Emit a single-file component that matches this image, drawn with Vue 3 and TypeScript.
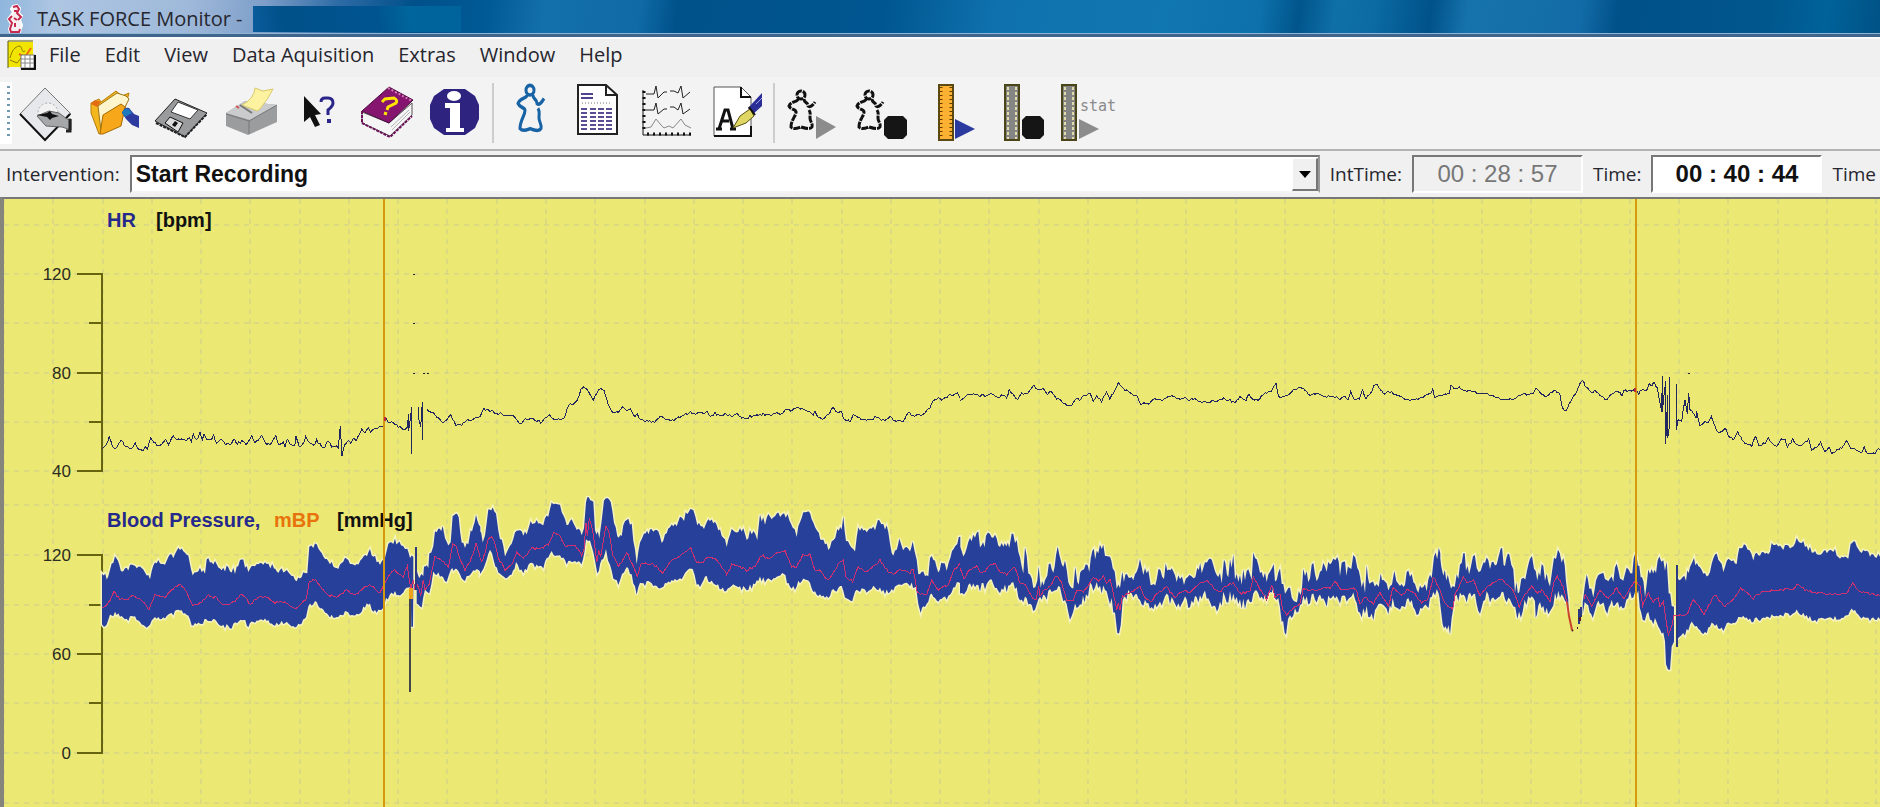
<script setup lang="ts">
import { ref } from 'vue'

type Point = [number, number]
interface Band { x: number; y: number; ripple: number; top: string; bottom: string }
interface Trace { x: number; y: number; points: string }

const intervention = ref('Start Recording')
const intTime = ref('00 : 28 : 57')
const time = ref('00 : 40 : 44')

const menus = ['File', 'Edit', 'View', 'Data Aquisition', 'Extras', 'Window', 'Help']

const columns = Array.from({ length: 39 }, (_, i) => Math.round(4 + i * 49.27))
const rows = [225, 274, 323, 373, 422, 471, 505, 555, 605, 654, 703, 753, 803]

const axes = [
  { top: 274, bottom: 471, minor: [323, 422], labels: [{ y: 274, text: '120' }, { y: 373, text: '80' }, { y: 471, text: '40' }] },
  { top: 555, bottom: 753, minor: [605, 703], labels: [{ y: 555, text: '120' }, { y: 654, text: '60' }, { y: 753, text: '0' }] },
]

// Samples are stored in thirds of a chart unit, relative to each block's origin.
const parse = (s: string): Point[] => s.trim().split(/\s+/).map(p => p.split(',').map(Number) as Point)

const noise = (n: number): number => {
  const v = Math.sin(n * 12.9898) * 43758.5453
  return v - Math.floor(v) - 0.5
}

// Interpolates between samples and adds the beat-to-beat ripple.
const edge = (s: string, ox: number, oy: number, ripple: number): string[] => {
  const pts = parse(s)
  const out: string[] = []
  for (let i = 0; i < pts.length - 1; i++) {
    const [x1, y1] = pts[i]
    const [x2, y2] = pts[i + 1]
    const steps = Math.max(1, Math.round((x2 - x1) / 5))
    for (let k = 0; k < steps; k++) {
      const x = x1 + ((x2 - x1) * k) / steps
      const y = y1 + ((y2 - y1) * k) / steps + noise(x + oy) * ripple
      out.push(`${(ox + x / 3).toFixed(1)},${(oy + y / 3).toFixed(1)}`)
    }
  }
  const last = pts[pts.length - 1]
  out.push(`${(ox + last[0] / 3).toFixed(1)},${(oy + last[1] / 3).toFixed(1)}`)
  return out
}

const toLine = (t: Trace): string => edge(t.points, t.x, t.y, 7).join(' ')

const toBand = (b: Band): string =>
  [...edge(b.top, b.x, b.y, b.ripple), ...edge(b.bottom, b.x, b.y, b.ripple * 0.8).reverse()].join(' ')

const heartRate = ([
  { x: 0, y: 200, points: '306,745 318,738 328,713 338,742 345,745 357,730 364,718 372,735 383,742 395,742 406,730 416,748 428,750 436,738 442,745 452,712 462,730 475,735 485,732 497,718 505,732 520,705 530,720 545,718 560,725 568,712 574,728 580,705 590,722 600,700 607,722 612,702 625,722 632,722 641,706 650,730 665,715 677,733 690,733 704,718 712,730 725,724 738,732 755,708 765,728 785,706 795,728 810,735 827,708 837,735 850,728 855,737 862,720 875,738 884,738 888,712 898,740 905,738 917,712 928,730 942,738 950,720 965,740 975,738 985,722 995,740 1015,740 1021,678 1026,766 1034,735 1046,722 1052,733 1062,712 1068,722 1085,690 1095,700 1105,682 1112,698 1125,685 1140,682 1150,678 1156,650 1165,665 1180,665 1195,680 1212,688 1222,680 1226,640 1226,690 1235,620 1235,762' },
  { x: 0, y: 200, points: '1256,618 1256,655 1262,685 1267,607 1267,720' },
  { x: 0, y: 200, points: '1280,625 1285,632 1300,638 1325,668 1340,660 1352,645 1368,675 1385,675 1400,658 1415,662 1440,650' },
  { x: 480, y: 370, points: '0,138 5,126 12,118 25,122 42,125 55,135 62,130 78,136 98,136 110,148 120,160 132,150 150,146 165,148 182,156 195,146 208,136 222,150 240,150 252,145 266,105 280,102 292,92 303,58 312,52 325,62 340,88 350,68 362,56 372,60 385,108 395,125 415,128 428,112 440,122 452,120 465,142 472,132 480,148 495,152 518,157 530,150 547,138 560,148 582,150 600,142 612,133 632,128 650,130 660,125 672,130 680,125 692,142 705,130 718,138 735,132 758,140 772,132 790,146 810,140 830,136 850,132 870,136 890,130 905,134 920,118 932,122 947,112 962,116 980,122 1000,132 1005,124 1015,140 1028,150 1040,136 1060,115 1072,128 1085,125 1090,145 1110,155 1120,132 1135,142 1148,150 1175,148 1188,138 1200,150 1220,150 1230,135 1240,150 1258,156 1275,148 1285,128 1298,138 1325,135 1340,122 1350,115 1360,92 1375,80 1385,92 1405,78 1420,74 1432,68 1440,85' },
  { x: 960, y: 370, points: '0,90 20,75 42,70 60,78 80,75 100,72 115,82 125,75 140,82 148,60 158,75 173,92 185,68 200,75 222,46 235,60 248,56 262,70 275,65 290,85 305,92 320,105 335,103 350,82 358,90 372,75 390,72 400,92 410,80 425,95 440,65 450,85 465,62 475,40 490,55 510,70 530,78 542,102 552,96 565,104 580,88 610,88 630,78 655,85 700,88 725,95 770,95 785,86 805,88 825,98 840,82 858,92 867,70 878,88 895,92 905,78 925,66 935,62 948,42 955,78 970,82 990,72 1000,55 1022,53 1040,65 1055,78 1070,68 1090,78 1130,80 1140,88 1155,82 1165,88 1172,65 1182,88 1198,85 1208,62 1218,85 1230,70 1247,40 1262,60 1275,75 1285,65 1310,72 1335,85 1350,94 1370,84 1390,85 1400,72 1412,75 1418,55 1424,85 1440,75' },
  { x: 1400, y: 360, points: '120,105 135,102 148,98 153,72 162,88 178,82 190,90 220,95 245,100 265,105 290,112 312,122 340,115 365,102 385,104 400,102 408,85 420,100 440,112 452,98 467,93 480,105 487,140 497,155 508,130 525,105 540,72 547,62 560,82 575,100 585,92 600,105 620,118 640,98 660,96 666,108 672,90 690,92 705,86 716,100 725,88 740,90 748,70 756,76 762,68 772,85 778,118 785,155 787,50 787,160 797,60 797,250 803,105 803,235 808,200 808,50' },
  { x: 1400, y: 360, points: '829,75 829,213 834,180 845,182 855,118 862,165 866,98 870,150 880,160 888,175 890,155 900,200 915,185 925,190 934,168 942,190 950,215 965,215 975,204 988,230 1000,240 1013,215 1022,232 1035,250 1055,256 1067,230 1076,255 1095,250 1105,232 1115,250 1130,258 1145,235 1155,240 1162,260 1178,240 1190,256 1210,254 1226,238 1235,268 1250,260 1262,248 1275,275 1287,262 1295,282 1312,268 1325,264 1340,240 1352,265 1365,270 1385,275 1393,262 1402,282 1425,282 1432,265 1440,268' },
] as Trace[]).map(toLine)

const artefacts: Point[] = [[413, 274], [413, 323], [413, 373], [423, 373], [427, 373], [1688, 373]]

const pressure = ([
  { x: 0, y: 480, ripple: 18,
    top: '306,290 325,290 335,245 345,237 358,248 362,275 375,265 400,260 425,265 450,298 460,255 475,245 490,252 510,225 525,228 535,205 550,207 565,235 578,280 600,268 615,275 620,238 640,245 655,265 665,270 685,262 705,275 725,235 740,265 750,270 765,255 800,252 822,262 830,280 840,265 865,280 890,297 915,275 922,275 928,205 940,198 960,205 970,230 990,245 1000,258 1015,262 1030,240 1050,248 1070,260 1092,232 1110,215 1125,228 1140,260 1155,235 1165,198 1185,185 1198,190 1215,205 1222,198 1230,235 1240,230',
    bottom: '306,440 320,440 330,402 350,402 375,418 405,412 425,435 445,444 460,415 485,415 500,405 520,400 540,388 555,398 575,430 600,435 618,415 645,425 660,438 700,438 722,412 745,435 765,425 795,420 820,437 845,425 880,440 905,425 918,415 925,375 940,368 960,378 980,400 1000,412 1035,400 1070,408 1105,370 1120,390 1145,395 1158,360 1175,340 1205,340 1220,320 1232,320 1234,445 1239,445 1240,330' },
  { x: 0, y: 480, ripple: 18,
    top: '1250,270 1258,290 1270,290 1272,255 1285,270 1288,215 1300,205 1305,152 1315,155 1328,145 1335,170 1345,200 1352,180 1358,115 1366,102 1376,115 1385,190 1395,200 1405,195 1412,150 1420,145 1428,110 1441,140',
    bottom: '1250,370 1265,375 1275,330 1288,335 1300,280 1320,285 1340,305 1352,265 1370,270 1390,305 1405,290 1415,280 1430,265 1441,275' },
  { x: 480, y: 370, ripple: 20,
    top: '0,475 8,510 15,490 25,425 38,405 48,430 55,485 75,550 95,525 105,480 120,475 130,495 145,480 152,455 165,450 185,462 205,440 215,400 225,393 240,410 250,445 265,470 275,445 290,475 305,490 312,480 318,400 322,385 340,388 345,480 358,500 365,460 372,388 392,386 402,460 412,500 425,495 435,455 445,440 455,470 465,545 470,580 480,520 492,492 515,482 535,485 545,520 555,500 570,470 590,465 600,440 612,445 622,422 640,425 652,460 672,470 685,438 700,460 720,480 740,525 750,485 770,490 785,475 800,500 815,485 832,500 840,440 855,455 865,440 880,445 895,432 912,430 928,445 938,480 950,495 960,450 970,435 985,422 1000,450 1012,490 1030,510 1045,530 1060,520 1072,480 1085,475 1090,440 1098,510 1110,525 1125,538 1135,470 1150,490 1170,475 1185,480 1198,445 1210,470 1225,478 1235,550 1250,545 1258,515 1275,540 1290,540 1298,518 1310,560 1315,610 1330,600 1345,625 1350,565 1365,570 1375,598 1388,575 1400,595 1412,570 1420,535 1432,520 1441,500',
    bottom: '0,605 10,590 30,545 42,570 55,610 72,628 90,618 108,580 130,608 150,580 165,585 190,588 215,545 240,560 260,580 285,570 300,580 308,575 318,510 330,505 340,540 352,612 365,575 378,540 390,590 400,620 415,645 432,600 445,590 455,620 470,672 480,640 510,640 540,658 560,640 580,632 600,625 620,605 638,602 650,640 660,645 680,622 700,640 738,662 760,648 790,655 815,650 840,625 860,632 890,625 912,612 930,652 945,655 955,635 985,630 1000,660 1020,675 1040,680 1060,665 1085,645 1095,680 1112,697 1130,660 1160,665 1185,652 1215,668 1240,655 1270,645 1295,645 1308,655 1315,700 1322,730 1330,705 1345,700 1350,675 1380,690 1410,680 1420,650 1441,640' },
  { x: 960, y: 370, ripple: 44,
    top: '0,510 10,540 25,530 40,500 55,492 65,545 78,500 95,510 105,478 115,515 130,525 148,545 155,500 165,498 175,535 185,585 190,590 195,545 205,610 220,640 232,635 236,595 242,640 255,645 262,595 280,600 288,540 298,550 305,570 315,570 325,625 340,640 346,590 352,640 365,620 372,590 388,600 397,545 410,560 425,530 435,560 450,540 458,600 470,650 480,660 487,620 510,635 530,615 540,575 550,610 565,610 572,650 590,620 612,610 622,580 635,610 650,625 660,610 672,630 688,600 700,625 712,575 725,595 735,590 741,558 755,590 770,620 785,620 792,590 805,600 820,565 825,620 840,630 855,610 875,620 880,555 890,580 905,620 920,635 930,610 937,575 945,620 955,615 960,580 965,640 975,680 985,650 1000,675 1022,680 1030,600 1045,615 1060,600 1075,620 1090,580 1105,590 1120,558 1132,575 1140,605 1155,590 1168,615 1180,575 1192,585 1200,640 1215,655 1220,605 1228,650 1250,655 1262,608 1270,640 1285,670 1296,655 1303,600 1315,635 1330,640 1340,608 1355,630 1370,640 1390,665 1405,640 1415,620 1422,545 1441,550',
    bottom: '0,655 12,690 20,660 40,645 65,655 80,635 100,635 120,660 145,650 165,640 180,690 190,680 200,700 220,712 235,690 255,690 270,665 290,650 305,665 320,700 330,735 345,700 360,708 378,680 390,650 410,650 425,665 440,660 455,700 465,740 472,795 482,755 488,690 505,675 530,680 545,705 560,700 575,720 595,700 620,675 645,705 670,695 700,700 730,670 750,680 762,712 775,715 790,680 820,680 840,700 870,700 885,665 905,690 920,690 935,660 950,680 960,700 965,755 978,788 990,740 1005,715 1020,710 1030,680 1055,690 1080,675 1100,695 1120,670 1145,695 1175,680 1190,690 1200,745 1215,720 1240,735 1265,705 1285,740 1298,690 1320,710 1340,690 1370,720 1392,722 1410,695 1420,660 1441,690' },
  { x: 1400, y: 360, ripple: 44,
    top: '119,590 130,635 148,645 158,690 170,650 180,620 190,578 198,625 212,630 219,580 230,610 242,635 255,610 275,620 290,605 302,575 315,605 328,590 340,610 345,680 358,680 370,660 382,620 390,600 402,605 412,665 425,612 435,655 450,675 462,615 474,590 490,600 498,665 505,720',
    bottom: '119,720 132,805 150,808 165,715 185,698 205,715 225,705 240,755 260,710 275,725 300,700 325,712 340,725 352,785 368,745 385,715 405,730 407,775 415,735 445,765 460,720 475,705 490,715 500,730 505,760' },
  { x: 1400, y: 360, ripple: 36,
    top: '548,710 555,675 560,640 568,685 580,710 588,650 600,635 615,640 625,665 640,650 650,620 665,660 680,625 697,625 705,590 718,610 726,665 735,700 745,640 755,620 768,650 778,580 790,610 800,620 806,700 815,720 822,740',
    bottom: '548,750 560,730 578,765 590,730 605,728 622,750 640,725 668,745 690,700 715,705 728,790 740,760 760,780 785,820 795,830 798,915 810,915 815,845 822,845' },
  { x: 1400, y: 360, ripple: 18,
    top: '832,655 858,655 862,640 870,625 882,600 895,620 910,640 925,655 935,615 945,580 960,600 970,630 985,600 1010,605 1018,565 1032,555 1048,575 1060,595 1085,575 1105,580 1115,555 1130,550 1150,565 1180,560 1190,542 1205,545 1220,565 1250,575 1262,590 1272,570 1285,580 1300,572 1320,588 1345,588 1352,550 1360,545 1375,565 1400,578 1420,590 1440,590',
    bottom: '832,840 838,825 855,820 875,790 890,800 905,822 920,820 935,790 970,808 985,790 1000,790 1020,765 1060,782 1100,770 1130,765 1170,765 1190,755 1220,770 1245,780 1290,778 1330,770 1355,750 1380,765 1400,778 1440,778' },
] as Band[]).map(toBand)

const meanPressure = ([
  { x: 0, y: 480, points: '306,385 320,378 342,338 360,358 380,358 400,348 420,358 448,388 465,345 495,350 520,325 542,312 560,338 578,375 600,370 625,345 650,355 668,372 700,368 725,342 752,373 775,352 800,352 825,370 840,362 888,385 905,368 918,360 928,305 948,300 965,325 985,345 1010,350 1040,332 1065,345 1108,312 1140,340 1160,300 1180,270 1200,280 1210,290 1222,255 1232,325 1240,300 1245,330' },
  { x: 0, y: 480, points: '1250,310 1262,345 1270,300 1275,330 1288,310 1305,228 1322,238 1345,262 1358,195 1368,195 1380,240 1395,270 1410,245 1428,192 1440,230' },
  { x: 480, y: 370, points: '0,560 4,575 12,560 25,510 35,500 45,520 55,565 75,598 95,585 110,545 130,565 155,535 180,535 205,525 222,487 240,500 255,530 285,525 305,555 312,540 318,460 322,500 328,445 338,480 350,575 356,545 362,560 378,470 388,490 398,555 415,590 430,570 440,548 458,585 472,620 482,580 520,582 548,608 570,575 600,558 632,535 650,575 670,578 685,558 715,575 740,612 755,585 775,588 800,600 825,590 845,555 865,568 890,550 915,545 935,590 950,590 968,555 990,552 1005,600 1020,600 1040,628 1055,620 1075,580 1090,570 1098,620 1118,635 1135,590 1155,608 1180,590 1200,572 1225,605 1245,612 1260,600 1290,610 1300,595 1312,670 1340,675 1355,632 1375,658 1405,645 1418,605 1440,580' },
  { x: 960, y: 370, points: '0,590 12,630 25,605 50,588 65,612 85,590 105,578 120,605 140,612 165,590 178,635 195,645 215,680 228,690 236,650 240,680 250,665 270,650 288,615 305,635 320,690 340,690 350,660 370,665 385,650 400,620 415,635 430,620 440,640 450,625 460,670 470,720 475,700 480,720 487,680 510,670 540,650 555,685 575,695 590,670 620,650 645,685 660,665 690,665 712,645 742,628 765,660 780,665 800,645 820,640 840,670 870,665 880,620 895,650 920,690 935,645 945,680 960,670 968,720 980,735 1000,712 1020,700 1030,655 1055,662 1080,658 1095,650 1110,655 1125,632 1145,662 1175,655 1190,660 1200,705 1215,680 1240,700 1260,670 1285,710 1300,650 1325,675 1340,660 1365,670 1385,700 1405,685 1420,620 1440,660' },
  { x: 1400, y: 360, points: '120,690 135,730 158,750 165,705 190,650 205,670 220,660 240,705 265,680 300,655 325,675 340,690 358,740 375,705 395,680 412,700 425,690 450,725 462,670 472,650 490,680 500,725' },
  { x: 1400, y: 360, points: '552,715 556,700 560,710 575,740 600,690 625,715 650,685 672,715 690,685 708,660 720,680 728,740 734,720 745,700 760,725 775,715 780,740 790,725 798,780 805,825 820,780 822,768 860,765 880,720 912,760 945,705 975,740 1000,718 1022,685 1060,715 1085,695 1130,690 1180,688 1195,672 1215,690 1285,705 1340,698 1358,668 1375,690 1400,700 1440,708' },
] as Trace[]).map(toLine)

const figurePath = 'M9 6a4 4 0 1 1 8 0a4 4 0 1 1-8 0M10 10c0 3-7 2-9 7c2 4 7 3 7 6c0 4-5 8-5 15c3 3 7 1 10 0c3 1 9 3 11 0c1-4-2-5-2-9c0-4 1-5-1-8M16 10c0 4 4 3 4 7c2 2 5-1 7-4'
</script>

<template>
  <div class="window">
    <header class="titlebar">
      <svg class="title-icon" width="18" height="30" viewBox="0 0 18 30" aria-hidden="true">
        <path d="M7 2l4-1 3 3-1 5 3 3-2 4 2 5-2 7H4l-1-3 2-5-3-5 3-4 2-3-2-3z" fill="#f7eef1" stroke="#fff" stroke-width="2" />
        <path d="M7 3l4-1 2 3-2 4 4 4-3 3M6 12l-3 3 3 4-2 6 1 3h8l1-3M8 7h3M8 14l3 2M9 19v4" fill="none" stroke="#c5294d" stroke-width="2" />
      </svg>
      <h1>TASK FORCE Monitor -</h1>
      <div class="masked"></div>
    </header>

    <nav class="menubar">
      <svg width="30" height="30" viewBox="0 0 30 30" aria-hidden="true">
        <rect x="1" y="2" width="25" height="25" fill="#f1e400" />
        <path d="M1 1h25M1 1v27" stroke="#5d5a00" />
        <path d="M3 18c2-8 5-11 9-12c4 0 2 8 6 5M3 20l7 3 4-5" stroke="#8a7b00" fill="none" />
        <path d="M12 14l6 3 6-9" stroke="#f36b10" stroke-width="2" fill="none" />
        <rect x="14" y="15" width="13" height="13" fill="#fff" stroke="#777" stroke-width="1" />
        <path d="M14 19h13M14 23h13M18 15v13M23 15v13" stroke="#888" />
        <path d="M28 15v14H14" stroke="#111" stroke-width="2" fill="none" />
      </svg>
      <button v-for="m in menus" :key="m" type="button">{{ m }}</button>
    </nav>

    <div class="toolbar" role="toolbar" aria-label="Main tools">
      <div class="grip"></div>
      <button type="button" aria-label="New recording">
        <svg viewBox="12 82 68 60">
          <path d="M45 87L20 113l25 26 26-26z" fill="#e6e8eb" stroke="#777" />
          <path d="M20 113l25 26 25-26" fill="none" stroke="#111" stroke-width="2" />
          <circle cx="48" cy="112" r="10" fill="#f2f2f2" stroke="#aaa" stroke-dasharray="2 2" />
          <path d="M37 115l12-5 10 2 8 6h4v11l-9-3-16-1z" fill="#a5a7a9" stroke="#666" />
          <path d="M37 114l10-2 3-2 2 3 7 2-7 2-2 2-3-3z" fill="#111" />
          <path d="M70 118v12h-4" stroke="#222" stroke-width="3" fill="none" />
        </svg>
      </button>
      <button type="button" aria-label="Open">
        <svg viewBox="80 82 68 60">
          <path d="M91 102l8-4 2 3 15-11 6 5 7-3-8 30-22 11-8-21z" fill="#f4b61e" stroke="#b57a08" />
          <path d="M98 105l19-13 9 3 3 3-10 20-18 12z" fill="#fff5cc" stroke="#9b7418" />
          <path d="M100 133l3-19 18-11 4 3-4 19-18 8z" fill="#f6a81a" stroke="#a66b00" />
          <path d="M91 103l4-4 6 2-4 5z" fill="#e56b12" />
          <path d="M122 112q2-6 7-5l5 6 5 2v12l-7-3-6-6z" fill="#2d3a9f" />
          <path d="M122 112q2-6 7-4l3 4-7 4z" fill="#1e78bd" />
        </svg>
      </button>
      <button type="button" aria-label="Save">
        <svg viewBox="148 82 68 60">
          <path d="M155 120l20-22 32 14-22 24z" fill="#999b9d" stroke="#222" />
          <path d="M156 122l29 14 22-23" fill="none" stroke="#222" stroke-width="2" stroke-dasharray="3 1" />
          <path d="M171 111l7-10 20 8-8 9z" fill="#fff" stroke="#333" />
          <path d="M165 122l5-6 13 6-5 9z" fill="#ddd" stroke="#111" />
          <path d="M172 124l3-4 3 2-3 4z" fill="#111" />
        </svg>
      </button>
      <button type="button" aria-label="Print">
        <svg viewBox="216 82 68 60">
          <path d="M226 112l19-12 32 4v17l-29 13-22-9z" fill="#9a9c9e" />
          <path d="M226 112l19-12 32 4-27 15z" fill="#c9cbcd" />
          <path d="M226 113l23 7 28-16M249 120v13" stroke="#777" fill="none" />
          <path d="M240 104l12 8" stroke="#777" stroke-width="2" />
          <path d="M236 105l3 2" stroke="#c55" stroke-width="2" />
          <path d="M242 104q12-6 13-17l8 3 10-2-5 9-8 11-3 2z" fill="#fcf2a0" stroke="#d8c96c" />
        </svg>
      </button>
      <button type="button" aria-label="Context help">
        <svg viewBox="284 82 68 60">
          <path d="M304 95v26l6-5 5 10 5-2-5-10 6-1z" fill="#111" />
          <path d="M321 101q0-4 4-4h3q5 0 5 5q0 3-5 7v5" fill="none" stroke="#2b2689" stroke-width="3" />
          <path d="M327 118h4v4h-4z" fill="#2b2689" />
        </svg>
      </button>
      <button type="button" aria-label="Manual">
        <svg viewBox="352 82 68 60">
          <path d="M362 111l27 11 23-20v12l-22 21-28-13z" fill="#f5f5f5" stroke="#555" />
          <path d="M362 110l27-24 24 13-24 23z" fill="#86156f" stroke="#4d0b3e" />
          <path d="M362 110v12l28 14 22-21" fill="none" stroke="#6c1159" stroke-width="2" stroke-dasharray="3 1" />
          <path d="M388 87l24 13" stroke="#d37bb8" stroke-width="2" stroke-dasharray="2 2" />
          <path d="M392 129l18-18M391 126l18-17" stroke="#b5b5b5" />
          <path d="M382 101l3-3 9-1q4 2 2 5l-8 4-1 3M384 112l3 1" fill="none" stroke="#ffe600" stroke-width="3" />
        </svg>
      </button>
      <button type="button" aria-label="Information">
        <svg viewBox="420 82 68 60">
          <path d="M444 88h21l10 7 4 9v14l-4 9-10 7h-21l-10-7-4-9v-14l4-9z" fill="#2e2480" />
          <ellipse cx="454" cy="95" rx="7" ry="5" fill="#fff" />
          <path d="M445 102h15v25h4v4h-18v-4h4v-20h-5z" fill="#fff" />
        </svg>
      </button>
      <div class="separator"></div>
      <button type="button" aria-label="Patient">
        <svg viewBox="498 82 68 60">
          <path transform="translate(518 82) scale(1 1.2)" :d="figurePath" fill="none" stroke="#1763a5" stroke-width="3" />
        </svg>
      </button>
      <button type="button" aria-label="Report">
        <svg viewBox="566 82 68 60">
          <path d="M579 84h28l11 10v39h-39z" fill="#fff" stroke="#222" stroke-width="2" />
          <path d="M607 84v10h11" fill="none" stroke="#222" stroke-width="2" />
          <path d="M582 93h12M582 97h12" stroke="#4f4291" stroke-width="2" />
          <path d="M583 102h28" stroke="#777" stroke-dasharray="1 2" />
          <path d="M585 107v22M594 107v22M602 107v22M610 107v22" stroke="#5b4d93" stroke-width="6" stroke-dasharray="2 2" />
        </svg>
      </button>
      <button type="button" aria-label="Signals">
        <svg viewBox="634 82 68 60">
          <path d="M644 89v45h48" fill="none" stroke="#111" stroke-width="1" />
          <path d="M645 90v42" stroke="#111" stroke-width="3" stroke-dasharray="2 4" />
          <path d="M648 133h44" stroke="#111" stroke-width="3" stroke-dasharray="2 4" />
          <path d="M647 93h8l2-8 2 12 6-6h3m3-1h4l4 2 3-7 2 12 7-6M647 109h8l2-7 2 11 6-5h3m3-2h4l4 3 3-7 2 11 7-5" fill="none" stroke="#222" />
          <path d="M647 127l5-1 5-8 5 6 3 3 5-2 4 2 8-9 4 6 6 3" fill="none" stroke="#888" />
        </svg>
      </button>
      <button type="button" aria-label="Annotate">
        <svg viewBox="702 82 68 60">
          <path d="M715 86h27l10 10v39h-37z" fill="#fff" stroke="#555" />
          <path d="M742 86v10h10M715 135h37v-10" fill="none" stroke="#111" stroke-width="2" />
          <path d="M717 128h6M720 128l6-19h3l5 19M722 120h8M731 128h6" fill="none" stroke="#111" stroke-width="3" />
          <path d="M763 92v13l-10 9-4-7z" fill="#2c2e97" />
          <path d="M757 103l6-6" stroke="#9aa2e8" />
          <path d="M734 127l7-12 10-7 4 7-8 7z" fill="#e0d663" stroke="#555112" />
          <path d="M750 106l6 8" stroke="#111" stroke-width="2" />
        </svg>
      </button>
      <div class="separator"></div>
      <button type="button" aria-label="Start patient recording">
        <svg viewBox="777 82 68 60">
          <path transform="translate(787 88)" :d="figurePath" fill="none" stroke="#111" stroke-width="3" stroke-dasharray="7 1" />
          <path d="M815 115l20 11-20 12z" fill="#8c8c8c" />
        </svg>
      </button>
      <button type="button" aria-label="Stop patient recording">
        <svg viewBox="845 82 68 60">
          <path transform="translate(855 88)" :d="figurePath" fill="none" stroke="#111" stroke-width="3" stroke-dasharray="7 1" />
          <path d="M887 115h15l4 4v15l-4 4h-15l-4-4v-15z" fill="#151515" />
        </svg>
      </button>
      <button type="button" aria-label="Start marker">
        <svg viewBox="913 82 68 60">
          <rect x="938" y="84" width="14" height="55" fill="#fcb132" stroke="#5c4a15" stroke-width="2" />
          <path d="M940 86v52M950 86v52" stroke="#5c3e00" stroke-width="3" stroke-dasharray="1 3" />
          <path d="M954 118l20 10-20 10z" fill="#2a3a9e" />
        </svg>
      </button>
      <button type="button" aria-label="Stop marker">
        <svg viewBox="981 82 68 60">
          <rect x="1004" y="84" width="14" height="55" fill="#858585" stroke="#4a4419" stroke-width="2" />
          <path d="M1007 86v52M1015 86v52" stroke="#e2dca8" stroke-width="2" stroke-dasharray="3 2" />
          <path d="M1025 115h14l4 4v15l-4 4h-14l-4-4v-15z" fill="#151515" />
        </svg>
      </button>
      <button type="button" aria-label="Statistics">
        <svg viewBox="1049 82 68 60">
          <rect x="1061" y="84" width="14" height="55" fill="#858585" stroke="#4a4419" stroke-width="2" />
          <path d="M1064 86v52M1072 86v52" stroke="#e2dca8" stroke-width="2" stroke-dasharray="3 2" />
          <path d="M1078 118l20 10-20 10z" fill="#8c8c8c" />
          <text x="1079" y="110" class="stat">stat</text>
        </svg>
      </button>
    </div>

    <form class="status" @submit.prevent>
      <label for="intervention">Intervention:</label>
      <div class="combo">
        <select id="intervention" v-model="intervention">
          <option>Start Recording</option>
        </select>
        <span class="arrow" aria-hidden="true"></span>
      </div>
      <label for="int-time">IntTime:</label>
      <input id="int-time" v-model="intTime" class="muted" type="text" readonly />
      <label for="time">Time:</label>
      <input id="time" v-model="time" type="text" />
      <span class="last">Time</span>
    </form>

    <main class="chart">
      <svg viewBox="4 199 1876 608" role="img" aria-label="Heart rate and blood pressure">
        <g class="grid">
          <line v-for="x in columns" :key="'c' + x" :x1="x" y1="199" :x2="x" y2="807" />
          <line v-for="y in rows" :key="'r' + y" x1="4" :y1="y" x2="1880" :y2="y" />
        </g>
        <g v-for="a in axes" :key="a.top" class="axis">
          <path :d="`M77 ${a.top}H102V${a.bottom}H77`" />
          <path v-for="m in a.minor" :key="m" :d="`M89 ${m}H102`" />
          <path v-for="l in a.labels" :key="'t' + l.y" :d="`M77 ${l.y}H102`" />
          <text v-for="l in a.labels" :key="l.y" x="71" :y="l.y + 6" text-anchor="end">{{ l.text }}</text>
        </g>
        <g class="band-halo">
          <polygon v-for="(p, i) in pressure" :key="i" :points="p" />
        </g>
        <g class="band">
          <polygon v-for="(p, i) in pressure" :key="i" :points="p" />
        </g>
        <path d="M416 547v43M1677 565v82" class="spike" />
        <path d="M410 590v102" class="spike dark" />
        <path d="M1579 609v15M1581 607v10" class="spike" />
        <g class="mean">
          <polyline v-for="(p, i) in meanPressure" :key="i" :points="p" />
        </g>
        <path d="M411 588v11" stroke="#eda21c" stroke-width="4" />
        <path d="M1567 602l2 14 3 14" class="dropout" />
        <path d="M1572 630l1 1M1577 628h1M1580 617v4" class="dropout dots" />
        <g class="rate">
          <polyline v-for="(p, i) in heartRate" :key="i" :points="p" />
        </g>
        <rect v-for="([x, y], i) in artefacts" :key="'d' + i" :x="x" :y="y" width="2" height="1" fill="#222" />
        <g class="heading">
          <text x="107" y="227" fill="#25298c">HR</text>
          <text x="156" y="227" fill="#111">[bpm]</text>
          <text x="107" y="527" fill="#25298c">Blood Pressure,</text>
          <text x="274" y="527" fill="#e8720c">mBP</text>
          <text x="337" y="527" fill="#111">[mmHg]</text>
        </g>
        <path d="M384 199V807M1636 199V807" class="marker" />
        <path d="M385 417v4M1635 388v4" stroke="#c22a3a" stroke-width="2" />
      </svg>
    </main>
  </div>
</template>

<style>
body {
  margin: 0;
  background: #ebe873;
}
</style>

<style scoped>
.window {
  min-height: 100vh;
  overflow: hidden;
  background: #ebe873;
  font-family: "Open Sans", "Noto Sans", sans-serif;
  font-size: 19px;
  color: #26262e;
}

.titlebar {
  display: flex;
  align-items: center;
  height: 37px;
  padding: 3px 0 0 6px;
  box-sizing: border-box;
  border-bottom: 3px solid #3f658c;
  box-shadow: inset 0 -1px #8eb5d6;
  background: linear-gradient(98deg, #8fb6dd 0%, #aec6e2 3%, #9fb9da 10%, #7f9fc9 14%, #2d6ba5 18%, #00508a 22%, #005a96 26%, #1470ab 29%, #0f6aa6 34%, #00528a 36%, #005690 47%, #0f72ae 53%, #1177b0 62%, #0d70aa 67%, #00558b 69%, #0f70a8 71%, #0b6ba2 73%, #00528a 76%, #1773ac 78%, #126ba6 84%, #005089 86%, #00578d 94%, #00629a 97%, #005284 100%);
}

.titlebar h1 {
  margin: 0 0 0 13px;
  font-size: 20px;
  line-height: 30px;
  font-weight: 400;
}

.masked {
  width: 208px;
  height: 26px;
  margin-left: 10px;
  background: linear-gradient(80deg, #0a5c9c 0%, #005089 15%, #005590 60%, #00659c 75%, #00639c 100%);
}

.menubar {
  display: flex;
  align-items: center;
  height: 40px;
  padding: 0 0 6px 7px;
  border-top: 2px solid #fafafa;
  box-sizing: border-box;
  background: #f0f0f0;
}

.menubar button {
  padding: 0;
  margin: 0 12px;
  border: 0;
  background: none;
  font: inherit;
  font-size: 20px;
  line-height: 30px;
  color: inherit;
}

.toolbar {
  display: flex;
  align-items: center;
  height: 74px;
  background: #f3f3f3;
  border-bottom: 2px solid #b3b3b3;
  box-sizing: border-box;
}

.grip {
  width: 12px;
  height: 62px;
  background: repeating-linear-gradient(#6f9ab0 0 2px, #fff 2px 6px) 7px 4px / 3px 54px no-repeat, #fff;
}

.toolbar button {
  flex: none;
  width: 68px;
  height: 60px;
  padding: 0;
  border: 0;
  background: none;
}

.toolbar button svg {
  display: block;
  width: 68px;
  height: 60px;
}

.stat {
  font-family: "DejaVu Sans Mono", monospace;
  font-size: 15px;
  fill: #8a8a8a;
}

.separator {
  flex: none;
  width: 2px;
  height: 60px;
  margin: 0 3px 0 4px;
  background: #cdcdcd;
}

.status {
  display: flex;
  align-items: center;
  height: 46px;
  padding-left: 6px;
  box-sizing: border-box;
  background: #f0f0f0;
  white-space: nowrap;
}

.status label {
  flex: none;
  margin-right: 10px;
}

.combo {
  position: relative;
  flex: 1;
  height: 38px;
  margin-right: 10px;
}

.combo select {
  width: 100%;
  height: 38px;
  padding: 0 32px 0 4px;
  border: 2px solid #777;
  border-right-color: #999;
  border-bottom-color: #f4f4f4;
  border-radius: 0;
  background: #fff;
  appearance: none;
  font: bold 23px "Liberation Sans", Arial, sans-serif;
  color: #111;
}

.arrow {
  position: absolute;
  top: 3px;
  right: 2px;
  width: 26px;
  height: 33px;
  box-sizing: border-box;
  border: 1px solid #fff;
  border-right: 2px solid #777;
  border-bottom: 2px solid #777;
  background: #f0f0f0;
  pointer-events: none;
}

.arrow::after {
  content: "";
  position: absolute;
  left: 6px;
  top: 12px;
  border: 6px solid transparent;
  border-top: 7px solid #000;
  border-bottom: 0;
}

.status input {
  flex: none;
  width: 171px;
  height: 38px;
  margin-right: 10px;
  padding: 0;
  border: 2px solid #777;
  border-right-color: #fff;
  border-bottom-color: #fff;
  box-sizing: border-box;
  background: #fff;
  text-align: center;
  font: bold 24px "Liberation Sans", Arial, sans-serif;
  color: #111;
}

.status input.muted {
  background: #f0f0f0;
  font-weight: 400;
  color: #777;
}

.last {
  flex: none;
  padding-right: 4px;
}

.chart {
  border-top: 2px solid #777;
  border-left: 4px solid #85857c;
}

.chart svg {
  display: block;
  width: 100%;
  height: auto;
}

.grid line {
  stroke: #cbcd91;
  stroke-width: 1;
  stroke-dasharray: 5 5;
}

.axis path {
  fill: none;
  stroke: #66640f;
  stroke-width: 2;
}

.axis text {
  font: 17px "Liberation Sans", Arial, sans-serif;
  fill: #2c2c20;
}

.heading text {
  font: bold 20px "Liberation Sans", Arial, sans-serif;
}

.band-halo polygon {
  fill: none;
  stroke: #f6f3c0;
  stroke-width: 3;
}

.band polygon {
  fill: #27409a;
}

.spike {
  fill: none;
  stroke: #2c3880;
  stroke-width: 2;
}

.spike.dark {
  stroke: #44484a;
}

.mean polyline {
  fill: none;
  stroke: #cf3170;
  stroke-width: 1;
  shape-rendering: crispEdges;
}

.dropout {
  fill: none;
  stroke: #c8442a;
  stroke-width: 2;
}

.dropout.dots {
  stroke: #541a28;
}

.rate polyline {
  fill: none;
  stroke: #23275f;
  stroke-width: 1;
  shape-rendering: crispEdges;
}

.marker {
  stroke: #d5980f;
  stroke-width: 2;
}
</style>
